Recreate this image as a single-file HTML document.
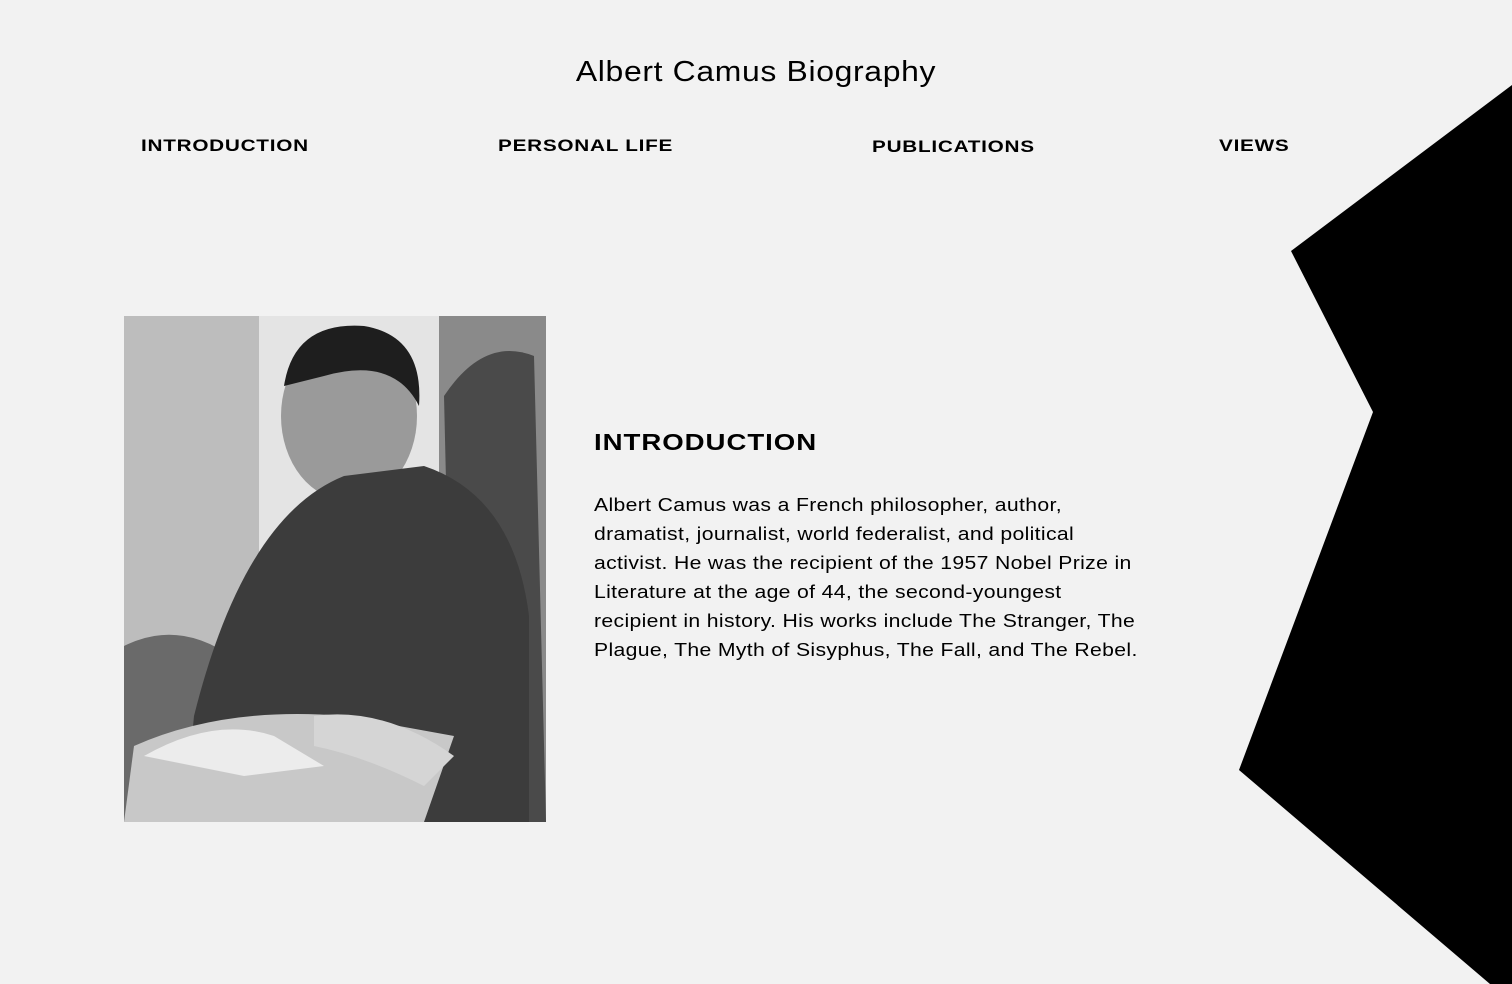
<!DOCTYPE html>
<html><head><meta charset="utf-8"><style>
html,body{margin:0;padding:0;background:#f2f2f2;width:1512px;height:984px;overflow:hidden;font-family:"Liberation Sans",sans-serif;color:#000}
.t{position:absolute;white-space:nowrap}
h1{position:absolute;left:0;width:1512px;top:56px;margin:0;text-align:center;font-weight:400;font-size:29px;letter-spacing:0.6px;transform:scaleX(1.1)}
.nav{font-weight:700;font-size:17px;letter-spacing:0.6px;transform-origin:left;transform:scaleX(1.22)}
.h2{font-weight:700;font-size:23px;letter-spacing:0.8px;transform-origin:left;transform:scaleX(1.2)}
.p{position:absolute;left:594px;top:490px;font-size:18.5px;line-height:29px;letter-spacing:0.3px;white-space:nowrap;transform-origin:left top;transform:scaleX(1.145)}
.photo{position:absolute;left:124px;top:316px;width:422px;height:506px;background:#ccc;overflow:hidden}
</style></head><body>
<h1>Albert Camus Biography</h1>
<div class="t nav" style="left:141px;top:136px">INTRODUCTION</div>
<div class="t nav" style="left:498px;top:136px">PERSONAL LIFE</div>
<div class="t nav" style="left:872px;top:137px">PUBLICATIONS</div>
<div class="t nav" style="left:1219px;top:136px">VIEWS</div>
<svg style="position:absolute;left:0;top:0" width="1512" height="984"><polygon points="1512,85 1291,251 1373,412 1239,770 1490,984 1512,984" fill="#000"/></svg>
<div class="photo">
<svg width="422" height="506">
<rect x="0" y="0" width="135" height="506" fill="#bdbdbd"/>
<rect x="135" y="0" width="180" height="506" fill="#e4e4e4"/>
<rect x="315" y="0" width="107" height="506" fill="#8a8a8a"/>
<path d="M320 80 Q360 20 410 40 L422 506 L330 506Z" fill="#4a4a4a"/>
<path d="M0 330 Q60 300 120 350 L140 506 L0 506Z" fill="#6a6a6a"/>
<ellipse cx="225" cy="100" rx="68" ry="85" fill="#9a9a9a"/>
<path d="M160 70 Q170 5 240 10 Q300 20 295 90 Q270 40 200 60Z" fill="#1e1e1e"/>
<path d="M70 400 Q120 200 220 160 L300 150 Q390 180 405 300 L405 506 L60 506Z" fill="#3c3c3c"/>
<path d="M10 430 Q100 390 220 400 L330 420 L300 506 L0 506Z" fill="#c8c8c8"/>
<path d="M20 440 Q90 400 150 420 L200 450 L120 460Z" fill="#ececec"/>
<path d="M190 400 Q260 390 330 440 L300 470 Q240 440 190 430Z" fill="#d5d5d5"/>
</svg>
</div>
<div class="t h2" style="left:594px;top:429px">INTRODUCTION</div>
<div class="p">Albert Camus was a French philosopher, author,<br>dramatist, journalist, world federalist, and political<br>activist. He was the recipient of the 1957 Nobel Prize in<br>Literature at the age of 44, the second-youngest<br>recipient in history. His works include The Stranger, The<br>Plague, The Myth of Sisyphus, The Fall, and The Rebel.</div>
</body></html>
